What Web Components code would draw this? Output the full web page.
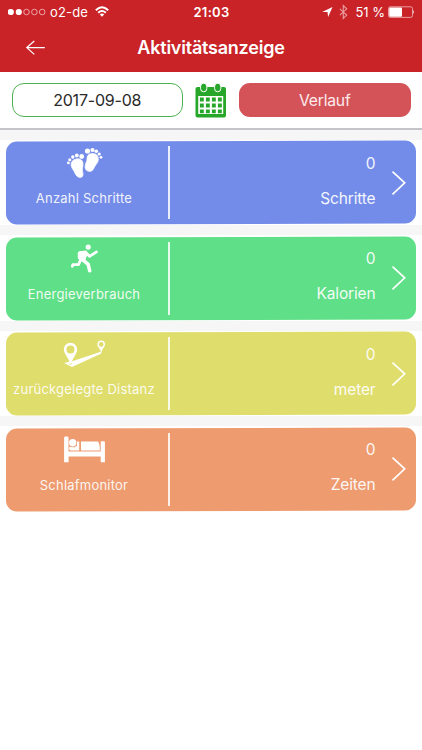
<!DOCTYPE html>
<html lang="de">
<head>
<meta charset="utf-8">
<title>Aktivitätsanzeige</title>
<style>
html,body{margin:0;padding:0;background:#fff}
body{width:422px;height:750px;overflow:hidden;font-family:Inter,"Liberation Sans",sans-serif}
</style>
</head>
<body>
<activity-app></activity-app>
<script>
const define = (name, html) => customElements.define(name, class extends HTMLElement {
  constructor() {
    super();
    const t = document.createElement('template');
    t.innerHTML = html;
    this.attachShadow({mode: 'open'}).append(t.content.cloneNode(true));
  }
});

define('status-bar', `<style>
:host{display:grid;grid-template-columns:1fr auto 1fr;align-items:center;height:24px;padding:0 7px 0 8px;color:#fff;font-size:13px;line-height:24px}
div{display:flex;align-items:center}
svg{display:block;flex:none}
.carrier{margin-left:4px;letter-spacing:.15px}
.time{font-weight:600;letter-spacing:.3px}
.right{justify-content:flex-end}
.pct{margin:0 3px 0 7.5px;letter-spacing:0}
</style>
<div><svg width="38" height="24" viewBox="0 0 38 24"><g fill="#fff"><circle cx="2.8" cy="12" r="3.1"/><circle cx="10.8" cy="12" r="3.1"/></g><g fill="none" stroke="#f3c2c4" stroke-width=".8"><circle cx="18.5" cy="12" r="2.8"/><circle cx="26.4" cy="12" r="2.8"/><circle cx="34.2" cy="12" r="2.8"/></g></svg>
<span class="carrier">o2-de</span>
<svg style="margin-left:6.500px" width="14" height="24" viewBox="0 0 14 24"><g fill="none" stroke="#fff" stroke-width="1.9"><path d="M.8 10.2Q7 4.300 13.200 10.200"/><path d="M3.200 12.800Q7 9.200 10.800 12.800"/></g><path d="M4.800 14.400Q7 12.500 9.200 14.400L7 16.800Z" fill="#fff"/></svg></div>
<span class="time">21:03</span>
<div class="right"><svg width="11" height="24" viewBox="0 0 11 24"><path d="M10.500 7 6.100 17 5.500 12H.2Z" fill="#fff"/></svg>
<svg style="margin-left:6px" width="9" height="24" viewBox="0 0 9 24"><path d="M.8 8.800 7.700 15.100 4.300 18.400V5.500L7.700 8.800.8 15.200" fill="none" stroke="#e99da0" stroke-width="1.100"/></svg>
<span class="pct">51 %</span>
<svg width="27" height="24" viewBox="0 0 27 24"><rect x=".5" y="6.800" width="24" height="10.600" rx="1.800" fill="none" stroke="#edaeb0" stroke-width=".9"/><rect x="1.200" y="7.500" width="12.800" height="9.200" rx="1" fill="#fff"/><path d="M25.400 10Q27 12 25.400 14.200Z" fill="#fff"/></svg></div>`);

define('nav-bar', `<style>
:host{display:grid;grid-template-columns:72px 1fr 72px;height:48px;color:#fff}
svg{display:block}
h1{margin:0;font-size:18px;line-height:47px;font-weight:600;text-align:center;letter-spacing:-.22px}
</style><svg width="72" height="48" viewBox="0 0 72 48"><path d="M34.300 17 26.800 23.600 34.300 30.400M26.800 23.600H44.800" fill="none" stroke="#fff" stroke-width="1.200"/></svg><h1><slot></slot></h1>`);

define('date-field', `<style>
:host{display:block;box-sizing:border-box;width:171.5px;height:34px;border:1.4px solid #4eb052;border-radius:12px;color:#292929;font-size:16px;line-height:33px;text-align:center;letter-spacing:-.2px}
</style><slot></slot>`);

define('calendar-icon', `<style>:host{display:block}svg{display:block}</style>
<svg width="32" height="36" viewBox="0 0 32 36"><path d="M2.500 4H29a2 2 0 0 1 2 2V32.400a2 2 0 0 1-2 2H2.500a2 2 0 0 1-2-2V6a2 2 0 0 1 2-2Z" fill="#27a729"/><path d="M3.200 13H28.200V31H3.200Z" fill="#fff"/><g fill="#27a729" stroke="#fff" stroke-width="1"><rect x="5.600" y=".2" width="6.200" height="8.600" rx="3.100"/><rect x="19.600" y=".2" width="6.200" height="8.600" rx="3.100"/></g><g fill="#27a729"><path d="M4.900 14.600h3.900v3.900H4.900Zm6 0h3.900v3.900h-3.900Zm6 0h3.900v3.900h-3.900Zm6 0h3.900v3.900h-3.900Z"/><path transform="translate(0 6)" d="M4.900 14.600h3.900v3.900H4.900Zm6 0h3.900v3.900h-3.900Zm6 0h3.900v3.900h-3.900Zm6 0h3.900v3.900h-3.900Z"/><path transform="translate(0 12)" d="M4.900 14.600h3.900v3.600H4.900Zm6 0h3.900v3.600h-3.900Zm6 0h3.900v3.600h-3.900Zm6 0h3.900v3.600h-3.900Z"/></g></svg>`);

define('history-button', `<style>
:host{display:block;width:171.500px;height:34px;border-radius:11px;background:#d45358;color:#fdeced;font-size:15.700px;line-height:35px;text-align:center;letter-spacing:-.2px}
</style><slot></slot>`);

define('activity-card', `<style>
:host{display:grid;grid-template-columns:156px 26px 1fr 46.5px;position:relative;box-sizing:border-box;height:85.4px;margin-bottom:10px;padding-left:6px;background:#fff;color:#fff}
:host::before{content:"";position:absolute;left:6px;right:6.5px;top:1.3px;height:83.2px;border-radius:11px;background:var(--tone);transform:skewY(-.13deg)}
.left,.right,.rule,svg{position:relative}
.left{display:flex;flex-direction:column;align-items:center}
::slotted(svg){display:block;flex:none;height:42px}
.label{font-size:13px;line-height:32px;white-space:nowrap;opacity:.9;letter-spacing:.22px;margin-top:.4px}
.rule{width:1.6px;height:73px;margin:6.3px 0 0 6.2px;background:#fff;opacity:.85}
.right{display:flex;flex-direction:column;align-items:flex-end;font-size:15.5px;opacity:.92;letter-spacing:-.15px}
.num{line-height:24px;margin-top:11.8px}
.unit{line-height:24px;margin-top:11px}
</style>
<div class="left"><slot name="icon"></slot><span class="label"><slot name="label"></slot></span></div>
<div class="rule"></div>
<div class="right"><span class="num"><slot name="value"></slot></span><span class="unit"><slot name="unit"></slot></span></div>
<svg width="46" height="85" viewBox="0 0 46 85"><path d="M16.500 31.600 28.700 42.800 16.500 54.300" fill="none" stroke="#fff" stroke-width="1.700"/></svg>`);

define('activity-app', `<style>
:host{display:block;width:422px;height:750px;background:#fff}
header{height:72.3px;background:#c92328}
.tools{display:flex;box-sizing:border-box;height:57.3px;padding:10.7px 11.500px 0 11.500px;justify-content:space-between;border-bottom:2px solid #c5c4c8}
main{box-sizing:border-box;padding-top:10.5px;background:linear-gradient(#f6f6f7 0 340px,#fff 340px);height:382px}
activity-card:last-child{margin-bottom:0}
svg{fill:#fff}
</style>
<header><status-bar></status-bar><nav-bar>Aktivitätsanzeige</nav-bar></header>
<div class="tools"><date-field>2017-09-08</date-field><calendar-icon></calendar-icon><history-button>Verlauf</history-button></div>
<main>
<activity-card style="--tone:#748ce9">
<svg slot="icon" width="44" height="42" viewBox="62 135.500 44 42"><path d="M76.200 154.500c4-.9 7 1.600 6.800 5.200-.1 3-1.100 4.500-.4 7.300.8 3.400.4 5.900-2.500 5.900-3.800 0-4.600-3.800-6.400-6.700-1.700-2.700-3.100-4.600-2.500-7.200.5-2.300 2.200-4 5-4.500Z" stroke="#fff" stroke-width=".7"/><path d="M91.500 149.100c4.500-.6 7.300 2.300 6.800 6.400-.4 3-2.500 4.300-3.800 6.900-1.300 2.800-2.600 5-5.800 4.400-3.800-.7-3.900-4.200-3.200-7 .5-2.300 1.600-3 1.500-5.200-.1-3 1.300-5.100 4.500-5.500Z" stroke="#fff" stroke-width=".7"/><circle cx="81.700" cy="152" r="2.400"/><circle cx="76.800" cy="151" r="1.900"/><circle cx="72.800" cy="152.500" r="1.700"/><circle cx="69.800" cy="155.300" r="1.500"/><circle cx="68.400" cy="158.400" r="1.400"/><circle cx="87.500" cy="146.500" r="2.600"/><circle cx="92.500" cy="145.500" r="2.100"/><circle cx="96.300" cy="146.800" r="1.800"/><circle cx="99.200" cy="149.500" r="1.600"/><circle cx="101" cy="152.800" r="1.400"/></svg>
<span slot="label">Anzahl Schritte</span><span slot="value">0</span><span slot="unit">Schritte</span></activity-card>
<activity-card style="--tone:#5fdf87">
<svg slot="icon" width="44" height="42" viewBox="62 234.900 44 42"><circle cx="88.200" cy="247" r="2.600"/><path d="M80 251.800H84.500L87 253.500 84 261.500 80 260Z" stroke="#fff" stroke-width="1.200"/><g fill="none" stroke="#fff" stroke-width="2.800" stroke-linecap="round" stroke-linejoin="round"><path d="M79.200 258V252.800L85.500 251.700 89.500 256.300 96.500 251.800"/><path d="M81.200 258.500 78.500 264.500H72.800L72.300 266.300"/></g><path d="M85 254.500 83.200 260 88.200 264.200 89.700 270.700" fill="none" stroke="#fff" stroke-width="3.500" stroke-linecap="round" stroke-linejoin="round"/></svg>
<span slot="label">Energieverbrauch</span><span slot="value">0</span><span slot="unit">Kalorien</span></activity-card>
<activity-card style="--tone:#dfdd6b">
<svg slot="icon" width="44" height="42" viewBox="62 331.200 44 42"><path fill-rule="evenodd" d="M70.500 342.900a6.700 6.700 0 0 1 6.700 6.700c0 4.500-5.100 8.500-5.700 14.300h-1.700c-.5-5.600-6-9.800-6-14.300a6.700 6.700 0 0 1 6.700-6.700Zm0 2.900a4 4 0 1 0 0 8 4 4 0 0 0 0-8Z"/><path fill-rule="evenodd" d="M101.200 340.700a3.800 3.800 0 0 1 3.800 3.800c0 3-3.100 4.500-3.400 8h-.8c-.3-3.500-3.400-5-3.400-8a3.800 3.800 0 0 1 3.800-3.800Zm0 1.500a2.400 2.400 0 1 0 0 4.800 2.400 2.400 0 0 0 0-4.800Z"/><path d="M64 363.200 73 361.200 101.500 351.800 100.900 354 72 367.200Z"/><path d="M68.800 363.300 70.300 364.800 72 363.200" fill="none" stroke="#dfdd6b" stroke-width=".7"/></svg>
<span slot="label">zurückgelegte Distanz</span><span slot="value">0</span><span slot="unit">meter</span></activity-card>
<activity-card style="--tone:#ee9b6f">
<svg slot="icon" width="44" height="42" viewBox="62 426.200 44 42"><path d="M64.100 438q0-1.300 1.300-1.300h1.700q1.400 0 1.400 1.300V451.700H100.700V442.300q0-.8.800-.8h2.600q.8 0 .8.800V462.400h-4.200V456.600H68.600V462.400H64.100Z"/><circle cx="72.700" cy="443" r="3.700"/><path d="M69.200 447.300 74.500 447.500 77 446V441.800H79.200V450.600H70.600Q69.200 450.600 69.200 449.200Z"/><path d="M81 441.700H98.200Q99.800 445 99.800 448.500V450.700H81Z"/></svg>
<span slot="label">Schlafmonitor</span><span slot="value">0</span><span slot="unit">Zeiten</span></activity-card>
</main>`);
</script>
</body>
</html>
